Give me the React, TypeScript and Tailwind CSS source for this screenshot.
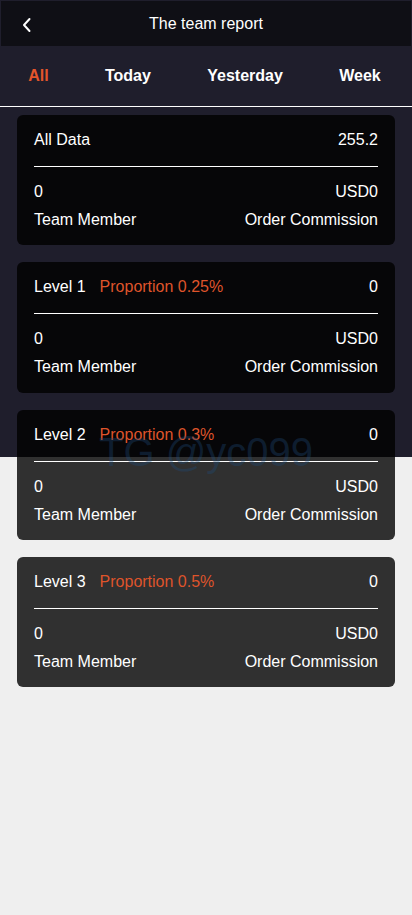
import React from "react";

const cards = [
  { title: "All Data", proportion: "", total: "255.2" },
  { title: "Level 1", proportion: "Proportion 0.25%", total: "0" },
  { title: "Level 2", proportion: "Proportion 0.3%", total: "0" },
  { title: "Level 3", proportion: "Proportion 0.5%", total: "0" },
];

export default function App() {
  return (
    <div
      className="relative min-h-[915px] w-[412px] bg-[linear-gradient(to_bottom,#1f1e2c_457px,#efefef_457px)] text-white"
      style={{ fontFamily: '"Liberation Sans", Arial, sans-serif' }}
    >
      <header className="relative flex h-[47px] items-center justify-center border border-[#1f1e2c] bg-[#0f0f15]">
        <svg
          className="absolute left-[20px] top-[16px]"
          width="12"
          height="16"
          viewBox="0 0 12 16"
          fill="none"
        >
          <path d="M8.5 2 L3 8 L8.5 14" stroke="white" strokeWidth="2" strokeLinecap="round" strokeLinejoin="round" />
        </svg>
        <span className="text-[16px] leading-none">The team report</span>
      </header>
      <nav className="flex h-[60px] items-center justify-around border-b border-white pb-[2px] pr-[3px] text-[16px] font-bold">
        <span className="text-[#e4552b]">All</span>
        <span>Today</span>
        <span>Yesterday</span>
        <span>Week</span>
      </nav>
      <div className="flex flex-col gap-[17px] px-[17px] pt-[8px]">
        {cards.map((c) => (
          <div key={c.title} className="rounded-[6px] bg-black/80 px-[17px] pb-[13.3px] pt-[13px] text-[16px] leading-[24px]">
            <div className="flex items-center justify-between">
              <div className="flex items-center gap-[14px]">
                <span>{c.title}</span>
                {c.proportion && <span className="text-[#df542b]">{c.proportion}</span>}
              </div>
              <span>{c.total}</span>
            </div>
            <div className="mt-[14px] h-px bg-white" />
            <div className="mt-[13px] flex justify-between">
              <span>0</span>
              <span>USD0</span>
            </div>
            <div className="mt-[4px] flex justify-between">
              <span>Team Member</span>
              <span>Order Commission</span>
            </div>
          </div>
        ))}
      </div>
      <div className="pointer-events-none absolute left-0 right-0 top-[431px] text-center text-[40px] leading-[42px] text-[#1e4a78] opacity-35">
        TG @yc099
      </div>
    </div>
  );
}
